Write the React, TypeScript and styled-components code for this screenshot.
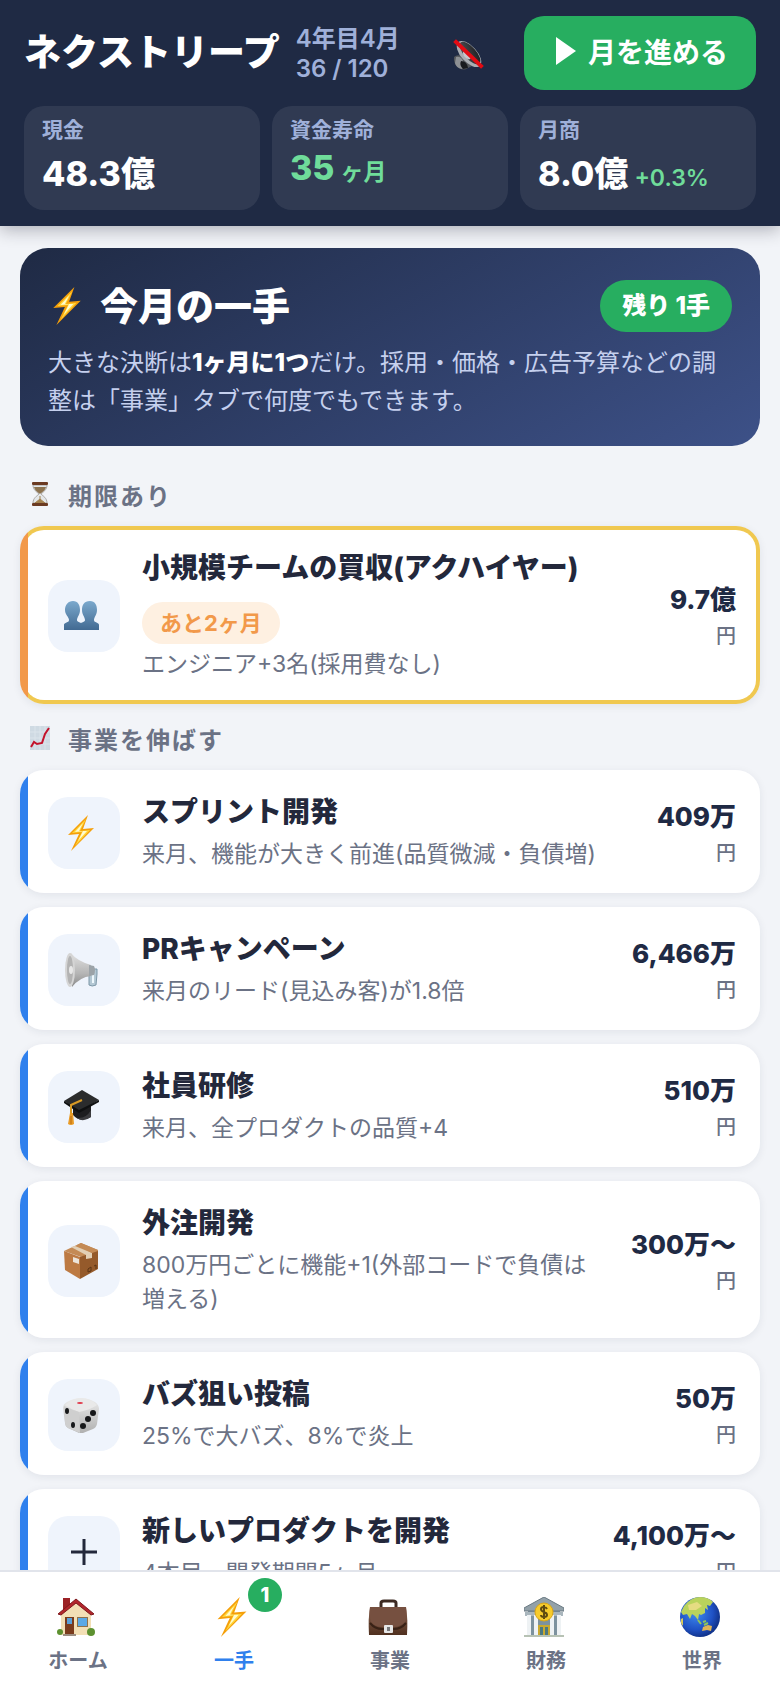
import { useState } from 'react'
import styled, { createGlobalStyle, css } from 'styled-components'

const GlobalStyle = createGlobalStyle`
    * {
        box-sizing: border-box;
    }

    body {
        margin: 0;
        background: #f2f4f8;
        color: #23283b;
        font-family: Inter, "Noto Sans CJK JP", sans-serif;
    }

    button {
        border: 0;
        padding: 0;
        font-family: inherit;
        color: inherit;
        cursor: pointer;
    }

    svg {
        display: block;
        flex: none;
    }
`

const Screen = styled.div`
    display: flex;
    flex-direction: column;
    height: 100vh;
`

const Header = styled.header`
    position: relative;
    flex: none;
    display: flex;
    flex-direction: column;
    gap: 16px;
    padding: 16px 24px;
    background: #1f2a44;
    color: #fff;
    box-shadow: 0 4px 16px rgba(20, 20, 40, 0.3);
`

const HeaderRow = styled.div`
    display: flex;
    align-items: center;
    gap: 16px;
`

const Company = styled.h1`
    margin: 0;
    font-size: 37px;
    line-height: 40px;
    font-weight: 800;
    white-space: nowrap;
`

const DateText = styled.div`
    flex: 1;
    padding-top: 2px;
    color: #9fb0d9;
    font-size: 24px;
    line-height: 30px;
    font-weight: 600;
`

const MuteButton = styled.button`
    display: flex;
    justify-content: center;
    align-items: center;
    width: 80px;
    height: 64px;
    padding-top: 4px;
    background: none;
`

const NextButton = styled.button`
    display: flex;
    justify-content: center;
    align-items: center;
    gap: 12px;
    width: 232px;
    height: 74px;
    padding: 0 0 4px 4px;
    border-radius: 20px;
    background: #27ae60;
    color: #fff;
    font-size: 28px;
    font-weight: 700;
`

const Stats = styled.div`
    display: grid;
    grid-template-columns: repeat(3, 1fr);
    gap: 12px;
`

const Stat = styled.div`
    height: 104px;
    padding: 10px 18px;
    border-radius: 20px;
    background: rgba(255, 255, 255, 0.08);
`

const StatLabel = styled.div`
    color: #9fb0d9;
    font-size: 21px;
    line-height: 28px;
    font-weight: 600;
`

const StatValue = styled.div<{ $good?: boolean }>`
    margin-top: 3px;
    color: ${(p) => (p.$good ? '#6fdc9a' : '#fff')};
    font-size: 34px;
    font-weight: 800;
    white-space: nowrap;
`

const StatNote = styled.span`
    margin-left: 6px;
    color: #6fdc9a;
    font-size: 23px;
    font-weight: 600;
`

const Main = styled.main`
    flex: 1;
    min-height: 0;
    overflow-y: auto;
    scrollbar-width: none;
    padding: 22px 20px;
`

const Hero = styled.section`
    margin-bottom: 30px;
    padding: 32px 28px 26px;
    border-radius: 28px;
    background: linear-gradient(150deg, #1f2a44, #3d5188);
    color: #c5d0ee;
`

const HeroHead = styled.div`
    display: flex;
    align-items: center;
    gap: 14px;
    height: 52px;
    margin-bottom: 12px;
`

const HeroTitle = styled.h2`
    flex: 1;
    margin: 0;
    color: #fff;
    font-size: 38px;
    line-height: 52px;
    font-weight: 800;
`

const RemainPill = styled.span`
    padding: 0 22px;
    border-radius: 26px;
    background: #27ae60;
    color: #fff;
    font-size: 24px;
    line-height: 52px;
    font-weight: 800;
`

const HeroText = styled.p`
    margin: 0;
    font-size: 24px;
    line-height: 38px;

    strong {
        color: #fff;
        font-weight: 800;
    }
`

const SectionTitle = styled.h3`
    display: flex;
    align-items: center;
    gap: 16px;
    height: 36px;
    margin: 0 0 14px;
    padding-left: 8px;
    color: #6b7285;
    font-size: 24px;
    font-weight: 700;
    letter-spacing: 2px;
`

const CardList = styled.div`
    display: flex;
    flex-direction: column;
    gap: 14px;
    margin-bottom: 16px;
`

const Card = styled.button<{ $urgent?: boolean }>`
    display: flex;
    align-items: center;
    gap: 22px;
    width: 100%;
    padding: 24px 24px 22px 28px;
    border-radius: 24px;
    background: linear-gradient(to right, #2f80ed 8px, #fff 8px);
    color: #23283b;
    text-align: left;
    box-shadow: 0 2px 8px rgba(31, 42, 68, 0.08);

    /* yellow frame, with the orange strip over its left side */
    ${(p) => p.$urgent && css`
        padding: 20px 20px 19px 24px;
        border: 4px solid transparent;
        background:
            linear-gradient(to right, #f2994a 8px, transparent 8px) border-box,
            linear-gradient(#fff, #fff) padding-box,
            linear-gradient(#f0c850, #f0c850) border-box;
    `}
`

const IconBox = styled.span`
    flex: none;
    display: flex;
    justify-content: center;
    align-items: center;
    width: 72px;
    height: 72px;
    padding-right: 6px;
    border-radius: 20px;
    background: #eff4fc;
`

const CardBody = styled.span`
    flex: 1;
    display: flex;
    flex-direction: column;
    align-items: flex-start;
`

const CardTitle = styled.span`
    font-size: 28px;
    line-height: 36px;
    font-weight: 800;
`

const Deadline = styled.span`
    margin: 16px 0 -4px;
    padding: 0 18px;
    border-radius: 21px;
    background: #fef0e1;
    color: #f2994a;
    font-size: 22px;
    line-height: 42px;
    font-weight: 700;
`

const CardText = styled.span`
    margin-top: 7px;
    color: #6b7285;
    font-size: 23px;
    line-height: 34px;
`

const Cost = styled.span`
    flex: none;
    display: flex;
    flex-direction: column;
    align-items: flex-end;
    color: #1f2a44;
    font-size: 26px;
    line-height: 40px;
    font-weight: 800;
`

const Unit = styled.span`
    color: #6b7285;
    font-size: 20px;
    line-height: 32px;
    font-weight: 500;
`

const Nav = styled.nav`
    flex: none;
    display: grid;
    grid-template-columns: repeat(5, 1fr);
    height: 118px;
    border-top: 2px solid #e1e4eb;
    background: #fff;
`

const NavButton = styled.button<{ $active?: boolean }>`
    display: flex;
    flex-direction: column;
    align-items: center;
    gap: 10px;
    padding-top: 25px;
    background: none;
    color: ${(p) => (p.$active ? '#2f80ed' : '#6b7285')};
    font-size: 20px;
    line-height: 28px;
    font-weight: 600;
`

const NavIcon = styled.span`
    position: relative;
    display: flex;
    align-items: center;
    height: 40px;
    padding-right: 4px;
`

const NavBadge = styled.span`
    position: absolute;
    top: -19px;
    left: 36px;
    width: 34px;
    height: 34px;
    border-radius: 17px;
    background: #27ae60;
    color: #fff;
    font-size: 20px;
    line-height: 34px;
    font-weight: 800;
    text-align: center;
`

const MuteIcon = () => (
    <svg width="32" height="32" viewBox="0 0 32 32">
        <defs>
            <linearGradient id="horn" x1="0" y1="1" x2="1" y2="0">
                <stop offset="0" stopColor="#55585c" />
                <stop offset="1" stopColor="#17181a" />
            </linearGradient>
        </defs>
        <path d="M2 18Q5 15 10 17L20 27 16 29Q12 32 7 29Q1 25 2 18Z" fill="#55585c" />
        <path d="M4 18Q9 17 11 22T10 30Q4 29 3 24Z" fill="#8d9094" />
        <path d="M9 22Q15 22 16 29L11 30Q7 26 9 22Z" fill="#191b1e" />
        <ellipse cx="17" cy="15" rx="16" ry="8" transform="rotate(48 17 15)" fill="#a9adb2" />
        <ellipse cx="18" cy="14" rx="14" ry="6" transform="rotate(48 18 14)" fill="url(#horn)" />
        <ellipse cx="15" cy="16" rx="5" ry="3" transform="rotate(48 15 16)" fill="#c5c8cc" />
        <path d="M4 3 29 27" stroke="#e30b13" strokeWidth="4" strokeLinecap="square" />
    </svg>
)

const PlayIcon = () => (
    <svg width="20" height="28" viewBox="0 0 20 28">
        <path d="M0 0 20 14 0 28Z" fill="#fff" />
    </svg>
)

const BoltIcon = ({ size = 36 }) => (
    <svg width={size} height={size} viewBox="0 0 36 36">
        <path d="M25 0 5 20 16 19 8 36 31 13 20 14Z" fill="#f59f0a" />
        <path d="M23 4 9 18 19 17 12 31 27 15 17 16Z" fill="#ffd63c" />
        <path d="M20 8 12 17 20 16 15 26 24 16 16 16Z" fill="#fffbd0" />
    </svg>
)

const HourglassIcon = () => (
    <svg width="24" height="24" viewBox="0 0 24 24">
        <path d="M5 3H19C19 8 15 10 13 12 15 14 19 16 19 21H5C5 16 9 14 11 12 9 10 5 8 5 3Z" fill="#e4e7ea" stroke="#a9a6a3" />
        <path d="M6 5H18C17 9 14 10 12 12 10 10 7 9 6 5Z" fill="#8d7350" />
        <path d="M12 14V17L17 21H7L12 17" fill="#a3824f" stroke="#a3824f" />
        <rect x="4" y="0" width="16" height="3" rx="1" fill="#6b3a22" />
        <rect x="4" y="21" width="16" height="3" rx="1" fill="#6b3a22" />
    </svg>
)

const ChartIcon = () => (
    <svg width="24" height="24" viewBox="0 0 24 24">
        <rect x="2" y="0" width="20" height="24" fill="#cfdae3" />
        <path d="M2 6H22M2 12H22M2 18H22M7 0V24M12 0V24M17 0V24" stroke="#dbe4eb" />
        <path d="M3 21 6 16 9 18 14 17 17 8 21 2" fill="none" stroke="#c3122b" strokeWidth="2" />
    </svg>
)

const PeopleIcon = () => (
    <svg width="36" height="36" viewBox="0 0 36 36">
        <defs>
            <linearGradient id="people" x1="0" y1="0" x2="0" y2="1">
                <stop offset="0" stopColor="#7ba9cd" />
                <stop offset="1" stopColor="#426a92" />
            </linearGradient>
        </defs>
        <path
            d="M10 3C15 3 17 7 17 12 17 17 14 19 14 22 14 24 17 24 18 25 19 24 22 24 22 22 22 19 19 17 19 12 19 7 21 3 27 3 32 3 34 7 34 12 34 17 31 19 31 22 31 25 36 24 36 27V32H1V27C1 24 6 25 6 22 6 19 2 17 2 12 2 7 5 3 10 3Z"
            fill="url(#people)"
        />
    </svg>
)

const MegaphoneIcon = () => (
    <svg width="36" height="36" viewBox="0 0 36 36">
        <defs>
            <linearGradient id="cone" x1="0" y1="0" x2="0" y2="1">
                <stop offset="0" stopColor="#e2e2e2" />
                <stop offset="0.6" stopColor="#b5b5b5" />
                <stop offset="1" stopColor="#8b8b8b" />
            </linearGradient>
        </defs>
        <path d="M26 17H34V22L33 33Q29 35 26 33Z" fill="#b4c8d4" stroke="#7d97a7" />
        <path d="M29 20V31H31V20Z" fill="#eef8fd" />
        <path d="M8 1Q14 9 28 13V24Q17 25 9 35Z" fill="url(#cone)" />
        <path d="M26 13 31 14Q33 18 31 23L26 24Z" fill="#9ca3a8" />
        <ellipse cx="7" cy="18" rx="5" ry="17" fill="#d5d5d5" />
        <ellipse cx="7" cy="18" rx="3" ry="14" fill="#b3b3b3" />
        <ellipse cx="8" cy="18" rx="2" ry="4" fill="#e8e8e8" />
    </svg>
)

const CapIcon = () => (
    <svg width="36" height="36" viewBox="0 0 36 36">
        <path d="M10 15V26Q17 34 28 28L28 15Z" fill="#1d1d1f" />
        <path d="M14 29Q23 30 28 21V28Q20 34 14 29Z" fill="#3b3b3e" />
        <path d="M1 12 19 1 36 11 16 23Z" fill="#2b2c2d" />
        <path d="M1 12 16 21 36 11V13L16 24 1 14Z" fill="#0f1011" />
        <path d="M19 11 8 16V26" fill="none" stroke="#d89a25" strokeWidth="2" />
        <path d="M7 24H10L11 35Q8 37 5 35Z" fill="#e99b26" />
        <path d="M8 27V35" stroke="#b86b10" />
    </svg>
)

const BoxIcon = () => (
    <svg width="36" height="36" viewBox="0 0 36 36">
        <path d="M1 8 18 0 35 7 18 14Z" fill="#c48a55" />
        <path d="M1 8 17 14V36L2 27Z" fill="#bd7a43" />
        <path d="M17 14 35 7V26L17 36Z" fill="#955a2b" />
        <path d="M8 4 12 3 29 10V15L23 16V12Z" fill="#e2cfb5" />
        <path d="M14 2 18 0 35 7V8L29 10Z" fill="#c48a55" />
        <path d="M10 14 16 16V21L10 19Z" fill="#ece4da" />
        <path d="M25 26 28 24V28L25 29ZM31 23 33 22V26" fill="none" stroke="#5b3415" />
    </svg>
)

const DiceIcon = () => (
    <svg width="36" height="36" viewBox="0 0 36 36">
        <defs>
            <linearGradient id="dice" x1="0" y1="0" x2="0" y2="1">
                <stop offset="0" stopColor="#ececec" />
                <stop offset="1" stopColor="#b0b0b0" />
            </linearGradient>
        </defs>
        <path d="M4 5Q18-3 32 5 36 8 36 12L34 27Q33 31 30 32L20 36Q17 37 14 35L5 31Q2 29 2 26L0 11Q0 7 4 5Z" fill="url(#dice)" />
        <path d="M2 8Q9 13 16 15 27 13 34 8 27 1 18 1 8 2 2 8Z" fill="#e9e9e9" />
        <path d="M1 9Q9 13 16 15L17 36 5 31Q2 29 2 25Z" fill="#cfcfcf" />
        <ellipse cx="17" cy="6" rx="3" ry="1" fill="#e0394a" />
        <g fill="#17181a">
            <ellipse cx="4" cy="14" rx="2" ry="3" />
            <ellipse cx="10" cy="28" rx="2" ry="3" />
            <circle cx="30" cy="16" r="3" />
            <circle cx="25" cy="22" r="3" />
            <circle cx="20" cy="29" r="3" />
        </g>
    </svg>
)

const PlusIcon = () => (
    <svg width="32" height="26" viewBox="-6 0 32 26">
        <path d="M13 0V26M0 13H26" stroke="#23283b" strokeWidth="3" />
    </svg>
)

const HouseIcon = () => (
    <svg width="38" height="38" viewBox="0 0 38 38">
        <rect x="6" y="0" width="7" height="12" fill="#9c2226" />
        <path d="M4 16 19 3 34 16V37H4Z" fill="#f3dfb5" />
        <path d="M1 16 19 1 37 16 34 17 19 5 4 17Z" fill="#b3262c" stroke="#7e191d" />
        <rect x="8" y="19" width="9" height="18" fill="#7a3b1c" />
        <rect x="10" y="20" width="5" height="6" fill="#5a9fd8" />
        <rect x="20" y="19" width="11" height="10" fill="#8f714a" />
        <rect x="21" y="20" width="9" height="8" fill="#5ba9e6" />
        <circle cx="3" cy="34" r="3" fill="#5d9130" />
        <circle cx="34" cy="34" r="4" fill="#5d9130" />
        <rect x="6" y="36" width="13" height="2" fill="#9b8d80" />
    </svg>
)

const BriefcaseIcon = () => (
    <svg width="40" height="38" viewBox="0 0 40 38">
        <defs>
            <linearGradient id="leather" x1="0" y1="0" x2="0" y2="1">
                <stop offset="0" stopColor="#8a6350" />
                <stop offset="1" stopColor="#50301f" />
            </linearGradient>
        </defs>
        <path d="M13 9V5Q13 3 16 3H25Q28 3 28 5V9" fill="none" stroke="#3c2a22" strokeWidth="3" />
        <path d="M2 9H38Q40 20 39 37H1Q0 20 2 9Z" fill="url(#leather)" />
        <path d="M2 9H38Q39 18 37 24 32 29 26 29H14Q7 29 3 24 1 18 2 9Z" fill="#765040" />
        <path d="M2 25Q7 31 14 31H26Q33 31 38 25" fill="none" stroke="#382116" strokeWidth="2" />
        <rect x="16" y="27" width="9" height="8" rx="1" fill="#e6e6e6" />
        <rect x="19" y="29" width="3" height="4" fill="#77787a" />
    </svg>
)

const BankIcon = () => (
    <svg width="40" height="40" viewBox="0 0 40 40">
        <path d="M4 12H36V38H4Z" fill="#7d929e" />
        <path d="M0 11 20 0 40 11V14H0Z" fill="#93a1a9" stroke="#697982" />
        <rect x="1" y="15" width="38" height="4" fill="#a9b6bd" />
        <g fill="#eef2f4">
            <rect x="3" y="18" width="4" height="21" />
            <rect x="10" y="18" width="4" height="21" />
            <rect x="26" y="18" width="4" height="21" />
            <rect x="33" y="18" width="4" height="21" />
        </g>
        <rect x="14" y="28" width="12" height="11" fill="#c9a92f" />
        <rect x="16" y="30" width="3" height="9" fill="#4c7880" />
        <rect x="21" y="30" width="3" height="9" fill="#4c7880" />
        <rect x="0" y="38" width="40" height="2" fill="#b7c2b4" />
        <circle cx="20" cy="15" r="9" fill="#f7cb2b" stroke="#d9a516" />
        <path d="M23 12Q22 10 20 10 17 10 17 12 17 14 20 15 23 16 23 18 23 20 20 20 17 20 17 18M20 8V22" fill="none" stroke="#5f4a10" strokeWidth="2" />
    </svg>
)

const GlobeIcon = () => (
    <svg width="40" height="40" viewBox="0 0 40 40">
        <defs>
            <radialGradient id="sea" cx="0.4" cy="0.4" r="0.6">
                <stop offset="0" stopColor="#3f8cf0" />
                <stop offset="0.7" stopColor="#1f51c4" />
                <stop offset="1" stopColor="#12358e" />
            </radialGradient>
        </defs>
        <circle cx="20" cy="20" r="20" fill="url(#sea)" />
        <path d="M4 9Q11 0 20 0 28 0 33 5L30 9 27 8 28 13 25 11 25 16 21 18 19 17 18 23 15 19 12 17 10 22 7 17 3 18 1 15Z" fill="#b9d35c" />
        <path d="M8 8 17 5 22 9 16 13 9 13Z" fill="#e5dc82" />
        <path d="M1 22 3 21 3 29 1 26Z" fill="#d8c95c" />
        <path d="M18 23 21 27M23 25 26 24M24 28 28 26" stroke="#8ec45c" strokeWidth="2" />
        <path d="M23 30 28 28 32 29 31 34 27 33 22 34Z" fill="#dfb457" />
    </svg>
)

const growthActions = [
    { icon: <BoltIcon />, title: 'スプリント開発', text: '来月、機能が大きく前進(品質微減・負債増)', cost: '409万' },
    { icon: <MegaphoneIcon />, title: 'PRキャンペーン', text: '来月のリード(見込み客)が1.8倍', cost: '6,466万' },
    { icon: <CapIcon />, title: '社員研修', text: '来月、全プロダクトの品質+4', cost: '510万' },
    { icon: <BoxIcon />, title: '外注開発', text: '800万円ごとに機能+1(外部コードで負債は増える)', cost: '300万〜' },
    { icon: <DiceIcon />, title: 'バズ狙い投稿', text: '25%で大バズ、8%で炎上', cost: '50万' },
    { icon: <PlusIcon />, title: '新しいプロダクトを開発', text: '4本目、開発期間5ヶ月', cost: '4,100万〜' }
]

const tabs = [
    { id: 'home', label: 'ホーム', icon: <HouseIcon /> },
    { id: 'move', label: '一手', icon: <BoltIcon size={40} />, badge: 1 },
    { id: 'business', label: '事業', icon: <BriefcaseIcon /> },
    { id: 'finance', label: '財務', icon: <BankIcon /> },
    { id: 'world', label: '世界', icon: <GlobeIcon /> }
]

function ActionCard({ icon, title, text, cost, deadline }: any) {
    return (
        <Card type="button" $urgent={!!deadline}>
            <IconBox>{icon}</IconBox>
            <CardBody>
                <CardTitle>{title}</CardTitle>
                {deadline && <Deadline>{deadline}</Deadline>}
                <CardText>{text}</CardText>
            </CardBody>
            <Cost>
                {cost}
                <Unit>円</Unit>
            </Cost>
        </Card>
    )
}

function App() {
    const [tab, setTab] = useState('move')

    return (
        <Screen lang="ja">
            <GlobalStyle />
            <Header>
                <HeaderRow>
                    <Company>ネクストリープ</Company>
                    <DateText>
                        4年目4月<br />36 / 120
                    </DateText>
                    <MuteButton type="button" aria-label="ミュート"><MuteIcon /></MuteButton>
                    <NextButton type="button"><PlayIcon />月を進める</NextButton>
                </HeaderRow>
                <Stats>
                    <Stat>
                        <StatLabel>現金</StatLabel>
                        <StatValue>48.3億</StatValue>
                    </Stat>
                    <Stat>
                        <StatLabel>資金寿命</StatLabel>
                        <StatValue $good>35<StatNote>ヶ月</StatNote></StatValue>
                    </Stat>
                    <Stat>
                        <StatLabel>月商</StatLabel>
                        <StatValue>8.0億<StatNote>+0.3%</StatNote></StatValue>
                    </Stat>
                </Stats>
            </Header>

            <Main>
                <Hero>
                    <HeroHead>
                        <BoltIcon size={38} />
                        <HeroTitle>今月の一手</HeroTitle>
                        <RemainPill>残り 1手</RemainPill>
                    </HeroHead>
                    <HeroText>
                        大きな決断は<strong>1ヶ月に1つ</strong>だけ。採用・価格・広告予算などの調整は「事業」タブで何度でもできます。
                    </HeroText>
                </Hero>

                <SectionTitle><HourglassIcon />期限あり</SectionTitle>
                <CardList>
                    <ActionCard
                        icon={<PeopleIcon />}
                        title="小規模チームの買収(アクハイヤー)"
                        deadline="あと2ヶ月"
                        text="エンジニア+3名(採用費なし)"
                        cost="9.7億"
                    />
                </CardList>

                <SectionTitle><ChartIcon />事業を伸ばす</SectionTitle>
                <CardList>
                    {growthActions.map((action) => (
                        <ActionCard key={action.title} {...action} />
                    ))}
                </CardList>
            </Main>

            <Nav>
                {tabs.map((t) => (
                    <NavButton key={t.id} type="button" $active={tab === t.id} onClick={() => setTab(t.id)}>
                        <NavIcon>
                            {t.icon}
                            {t.badge && <NavBadge>{t.badge}</NavBadge>}
                        </NavIcon>
                        {t.label}
                    </NavButton>
                ))}
            </Nav>
        </Screen>
    )
}

export default App
